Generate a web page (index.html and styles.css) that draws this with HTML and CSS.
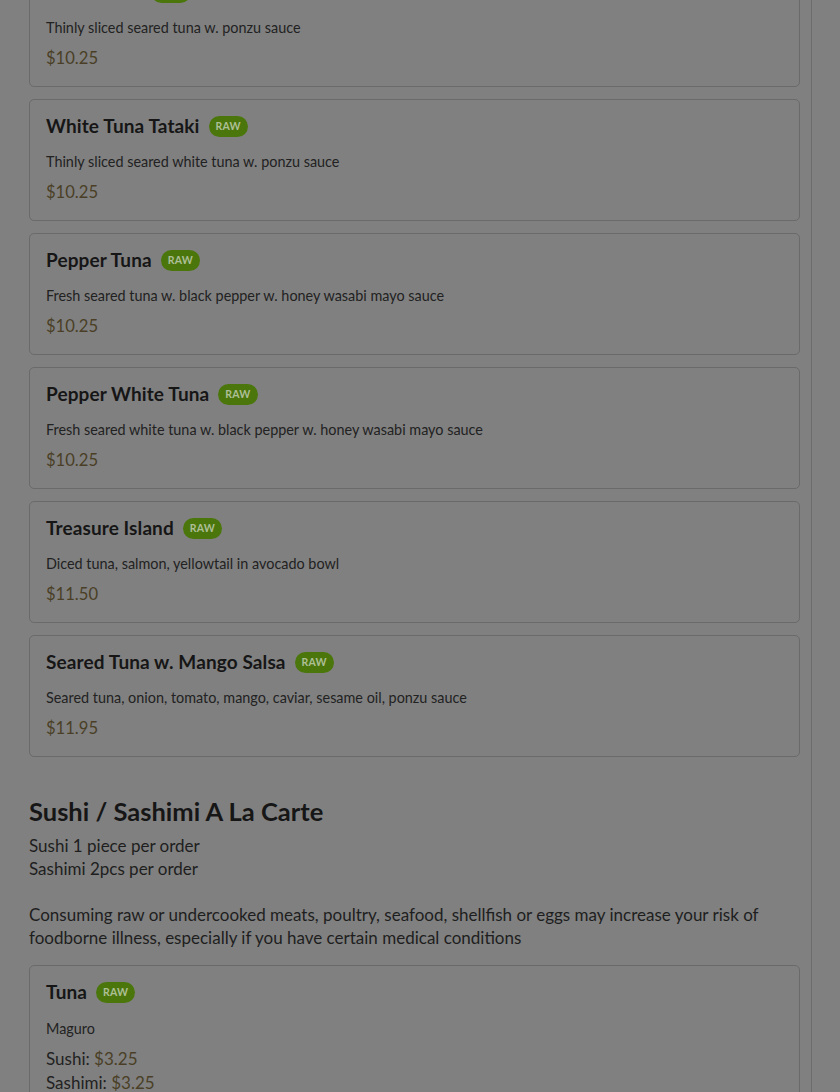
FILE: index.html
```html
<!DOCTYPE html>
<html lang="en">
<head>
<meta charset="utf-8">
<title>Menu</title>
<link rel="stylesheet" href="styles.css">
</head>
<body>
<div class="page">
  <main class="menu">
    <div class="card">
      <div class="card-head"><h3 class="card-title">Tuna Tataki</h3><span class="badge">RAW</span></div>
      <p class="card-desc">Thinly sliced seared tuna w. ponzu sauce</p>
      <p class="price">$10.25</p>
    </div>
    <div class="card">
      <div class="card-head"><h3 class="card-title">White Tuna Tataki</h3><span class="badge">RAW</span></div>
      <p class="card-desc">Thinly sliced seared white tuna w. ponzu sauce</p>
      <p class="price">$10.25</p>
    </div>
    <div class="card">
      <div class="card-head"><h3 class="card-title">Pepper Tuna</h3><span class="badge">RAW</span></div>
      <p class="card-desc">Fresh seared tuna w. black pepper w. honey wasabi mayo sauce</p>
      <p class="price">$10.25</p>
    </div>
    <div class="card">
      <div class="card-head"><h3 class="card-title">Pepper White Tuna</h3><span class="badge">RAW</span></div>
      <p class="card-desc">Fresh seared white tuna w. black pepper w. honey wasabi mayo sauce</p>
      <p class="price">$10.25</p>
    </div>
    <div class="card">
      <div class="card-head"><h3 class="card-title">Treasure Island</h3><span class="badge">RAW</span></div>
      <p class="card-desc">Diced tuna, salmon, yellowtail in avocado bowl</p>
      <p class="price">$11.50</p>
    </div>
    <div class="card">
      <div class="card-head"><h3 class="card-title">Seared Tuna w. Mango Salsa</h3><span class="badge">RAW</span></div>
      <p class="card-desc">Seared tuna, onion, tomato, mango, caviar, sesame oil, ponzu sauce</p>
      <p class="price">$11.95</p>
    </div>

    <section class="section">
      <h2 class="section-title">Sushi / Sashimi A La Carte</h2>
      <p class="section-note">Sushi 1 piece per order<br>Sashimi 2pcs per order</p>
      <p class="section-note warn">Consuming raw or undercooked meats, poultry, seafood, shellfish or eggs may increase your risk of foodborne illness, especially if you have certain medical conditions</p>
    </section>

    <div class="card">
      <div class="card-head"><h3 class="card-title">Tuna</h3><span class="badge">RAW</span></div>
      <p class="card-desc last-desc">Maguro</p>
      <p class="price-line">Sushi: <span class="amount">$3.25</span></p>
      <p class="price-line">Sashimi: <span class="amount">$3.25</span></p>
    </div>
  </main>
</div>
</body>
</html>
```

FILE: styles.css
```css
html, body {
  margin: 0;
  padding: 0;
  background: #808080;
}
body {
  font-family: Lato, "Open Sans", "Noto Sans", sans-serif;
  color: #1c1c1c;
  overflow: hidden;
}
.page {
  width: 811px;
  border-right: 1px solid #6c6c6c;
  min-height: 1200px;
  margin-top: -35px;
}
.menu {
  width: 771px;
  margin-left: 29px;
  display: flex;
  flex-direction: column;
  gap: 12px;
}
.card {
  border: 1px solid #6a6a6a;
  border-radius: 5px;
  padding: 16px 16px 17px;
  display: flex;
  flex-direction: column;
}
.card-head {
  display: flex;
  align-items: center;
  gap: 9px;
  height: 20px;
}
.card-title {
  margin: 0;
  font-size: 19px;
  font-weight: 700;
  line-height: 20px;
  letter-spacing: 0.1px;
  color: #161616;
}
.badge {
  display: inline-flex;
  align-items: center;
  height: 21px;
  padding: 0 7px;
  border-radius: 11px;
  background: #4b760c;
  color: #adbf96;
  font-size: 10.5px;
  font-weight: 700;
  letter-spacing: 0.2px;
}
.card-desc {
  margin: 16px 0 0;
  font-size: 14.4px;
  line-height: 20px;
  color: #222222;
}
.last-desc {
  margin-top: 17px;
}
.price {
  margin: 9px 0 0;
  font-size: 16.6px;
  line-height: 22px;
  color: #4a3f26;
}
.price-line {
  margin: 0;
  font-size: 17px;
  line-height: 24px;
  color: #222222;
}
.card-desc + .price-line {
  margin-top: 8px;
}
.amount {
  color: #4a3f26;
}
.section {
  padding-top: 26px;
  padding-bottom: 4px;
}
.section-title {
  margin: 0;
  font-size: 25.5px;
  font-weight: 700;
  line-height: 32px;
  color: #161616;
}
.section-note {
  margin: 7px 0 0;
  font-size: 17px;
  line-height: 23px;
  color: #1e1e1e;
}
.section-note.warn {
  margin-top: 23px;
}
```
